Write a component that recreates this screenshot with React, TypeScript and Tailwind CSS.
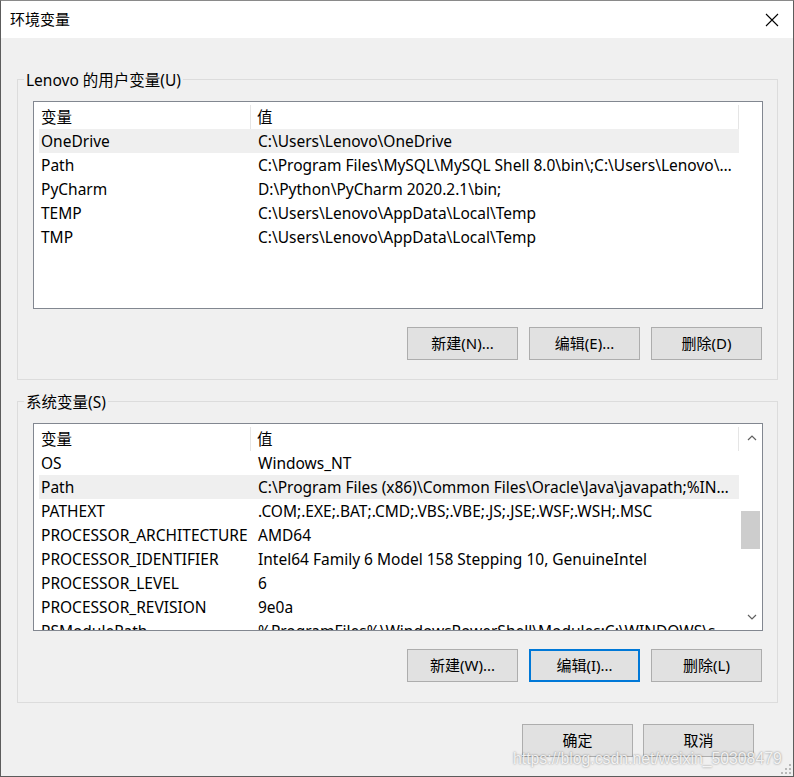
import React from "react";

type EnvVar = { name: string; value: string };

const userVars: EnvVar[] = [
  { name: "OneDrive", value: String.raw`C:\Users\Lenovo\OneDrive` },
  {
    name: "Path",
    value: String.raw`C:\Program Files\MySQL\MySQL Shell 8.0\bin\;C:\Users\Lenovo\AppData\Local\Programs\Python\Python38\Scripts\;`,
  },
  { name: "PyCharm", value: String.raw`D:\Python\PyCharm 2020.2.1\bin;` },
  { name: "TEMP", value: String.raw`C:\Users\Lenovo\AppData\Local\Temp` },
  { name: "TMP", value: String.raw`C:\Users\Lenovo\AppData\Local\Temp` },
];

const systemVars: EnvVar[] = [
  { name: "OS", value: "Windows_NT" },
  {
    name: "Path",
    value: String.raw`C:\Program Files (x86)\Common Files\Oracle\Java\javapath;%INTEL_DEV_REDIST%redist\intel64\compiler;`,
  },
  { name: "PATHEXT", value: ".COM;.EXE;.BAT;.CMD;.VBS;.VBE;.JS;.JSE;.WSF;.WSH;.MSC" },
  { name: "PROCESSOR_ARCHITECTURE", value: "AMD64" },
  { name: "PROCESSOR_IDENTIFIER", value: "Intel64 Family 6 Model 158 Stepping 10, GenuineIntel" },
  { name: "PROCESSOR_LEVEL", value: "6" },
  { name: "PROCESSOR_REVISION", value: "9e0a" },
  {
    name: "PSModulePath",
    value: String.raw`%ProgramFiles%\WindowsPowerShell\Modules;C:\WINDOWS\system32\WindowsPowerShell\v1.0\Modules`,
  },
];

const uiFont = "font-['Noto_Sans','Noto_Sans_CJK_SC',sans-serif]";

function Button({ label, focused }: { label: string; focused?: boolean }) {
  return (
    <button
      type="button"
      className={`h-[33px] w-[111px] bg-[#e1e1e1] text-[15px] text-black ${
        focused ? "border-2 border-[#0078d7]" : "border border-[#adadad]"
      }`}
    >
      {label}
    </button>
  );
}

function ScrollBar() {
  return (
    <div className="flex w-[22px] shrink-0 flex-col bg-white">
      <div className="flex h-[27px] items-center justify-center pl-[1px]">
        <svg width="10" height="6" viewBox="0 0 10 6">
          <path d="M1 5 L5 1 L9 5" fill="none" stroke="#606060" strokeWidth="1.2" />
        </svg>
      </div>
      <div className="relative flex-1">
        <div className="absolute left-[1px] top-[60px] h-[38px] w-[19px] bg-[#cdcdcd]" />
      </div>
      <div className="flex h-[26px] items-center justify-center pl-[1px]">
        <svg width="10" height="6" viewBox="0 0 10 6">
          <path d="M1 1 L5 5 L9 1" fill="none" stroke="#606060" strokeWidth="1.2" />
        </svg>
      </div>
    </div>
  );
}

function VarList({
  rows,
  selected,
  scroll,
}: {
  rows: EnvVar[];
  selected: number;
  scroll?: boolean;
}) {
  return (
    <div className="flex h-[208px] overflow-hidden border border-[#828790] bg-white">
      <div className="flex-1 overflow-hidden pl-[5px]">
        {/* column headers */}
        <div className="flex h-[27px] w-[700px] items-center pt-[3px] text-[15.5px]">
          <div className="w-[212px] self-stretch border-r border-[#e5e5e5] pl-[2px] leading-[24px]">
            变量
          </div>
          <div className="flex-1 self-stretch border-r border-[#e5e5e5] pl-[6px] leading-[24px]">
            值
          </div>
        </div>
        {rows.map((row, i) => (
          <div
            key={row.name}
            className={`flex h-[24px] w-[700px] items-center pt-[1px] text-[15.5px] ${
              i === selected ? "bg-[#efefef]" : ""
            }`}
          >
            <div className="w-[212px] shrink-0 truncate pl-[2px]">{row.name}</div>
            <div className="min-w-0 flex-1 truncate pl-[7px] pr-[6px]">{row.value}</div>
          </div>
        ))}
      </div>
      {scroll ? <ScrollBar /> : <div className="w-[22px] shrink-0" />}
    </div>
  );
}

function GroupBox({
  title,
  children,
  bottomPad,
}: {
  title: string;
  children: React.ReactNode;
  bottomPad: string;
}) {
  return (
    <div className={`relative border border-[#dcdcdc] pl-[15px] pr-[14px] pt-[21px] ${bottomPad}`}>
      <span className="absolute left-[6px] top-0 -translate-y-1/2 bg-[#f0f0f0] px-[2px] text-[15.5px] leading-[20px]">
        {title}
      </span>
      {children}
    </div>
  );
}

export default function App() {
  return (
    <div
      className={`relative flex h-[777px] w-[794px] flex-col overflow-hidden border border-[#5c5c5c] border-t-[#8a8a8a] bg-[#f0f0f0] text-black ${uiFont}`}
    >
      {/* title bar */}
      <div className="flex h-[37px] shrink-0 items-center justify-between bg-white pl-[9px] pr-[14px]">
        <span className="text-[15px]">环境变量</span>
        <svg width="14" height="14" viewBox="0 0 14 14">
          <path d="M1 1 L13 13 M13 1 L1 13" stroke="#000" strokeWidth="1.1" />
        </svg>
      </div>

      <div className="flex flex-col pl-[16px] pr-[15px] pt-[41px]">
        <GroupBox title="Lenovo 的用户变量(U)" bottomPad="pb-[19px]">
          <VarList rows={userVars} selected={0} />
          <div className="mt-[18px] flex justify-end gap-[11px] pr-[1px]">
            <Button label="新建(N)..." />
            <Button label="编辑(E)..." />
            <Button label="删除(D)" />
          </div>
        </GroupBox>

        <div className="mt-[21px]">
          <GroupBox title="系统变量(S)" bottomPad="pb-[20px]">
            <VarList rows={systemVars} selected={1} scroll />
            <div className="mt-[18px] flex justify-end gap-[11px] pr-[1px]">
              <Button label="新建(W)..." />
              <Button label="编辑(I)..." focused />
              <Button label="删除(L)" />
            </div>
          </GroupBox>
        </div>

        <div className="mt-[21px] flex justify-end gap-[10px] pr-[24px]">
          <Button label="确定" />
          <Button label="取消" />
        </div>
      </div>

      {/* blog watermark */}
      <span className="pointer-events-none absolute left-[512px] top-[746px] whitespace-nowrap font-['Liberation_Sans',sans-serif] text-[15.8px] text-white/85 [text-shadow:0_0_2px_rgba(0,0,0,0.5)]">
        https://blog.csdn.net/weixin_50308479
      </span>

      {/* resize grip */}
      <svg className="absolute bottom-[1px] right-[1px]" width="12" height="12" viewBox="0 0 12 12">
        <rect x="9" y="1" width="2" height="2" fill="#b8b8b8" />
        <rect x="5" y="5" width="2" height="2" fill="#b8b8b8" />
        <rect x="9" y="5" width="2" height="2" fill="#b8b8b8" />
        <rect x="1" y="9" width="2" height="2" fill="#b8b8b8" />
        <rect x="5" y="9" width="2" height="2" fill="#b8b8b8" />
        <rect x="9" y="9" width="2" height="2" fill="#b8b8b8" />
      </svg>
    </div>
  );
}
